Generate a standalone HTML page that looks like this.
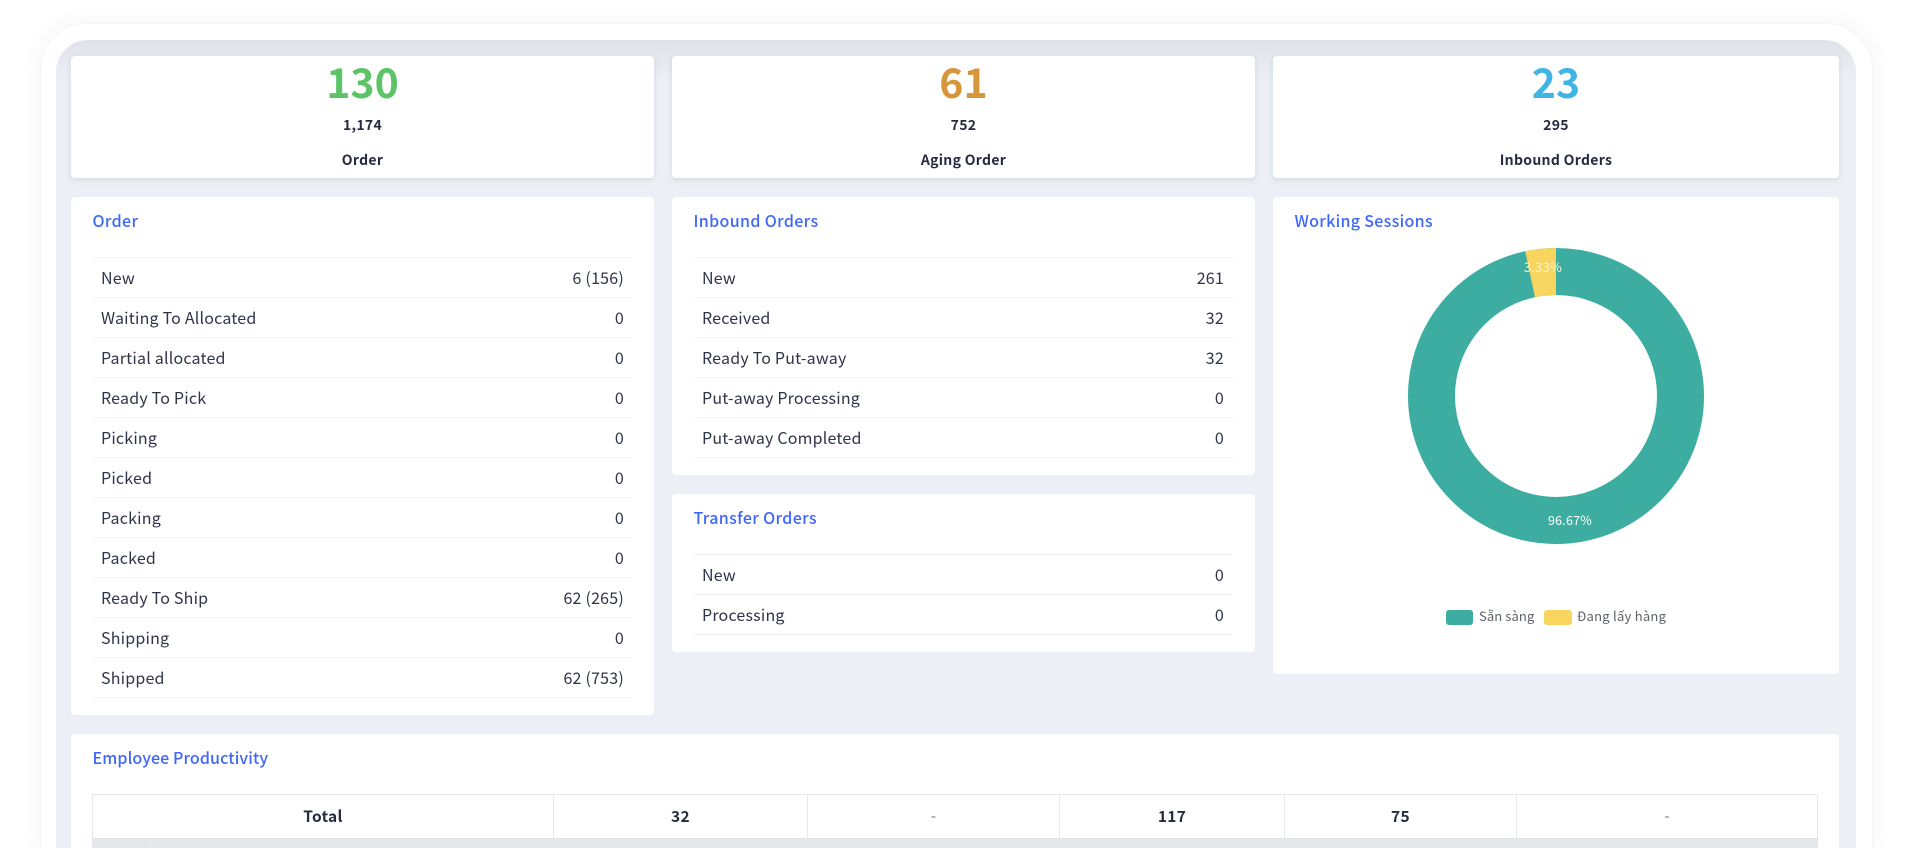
<!DOCTYPE html>
<html><head><meta charset="utf-8"><style>
*{box-sizing:border-box;margin:0;padding:0}
html,body{width:1912px;height:848px;overflow:hidden;background:#fff}
#p{position:absolute;left:0;top:0;width:1912px;height:848px;overflow:hidden;background:#fff;font-family:"Noto Sans CJK JP","Liberation Sans",sans-serif;color:#343a4e}
.a{position:absolute}
.frame{left:40px;top:23px;width:1833px;height:825px;background:#fff;border-radius:46px 46px 0 0;box-shadow:0 0 24px rgba(40,50,80,.06);border:1px solid #f3f4f6;border-bottom:0}
.bg{left:56px;top:40px;width:1800px;height:808px;background:linear-gradient(#dfe3ea 0,#e4e8ed 16px,#ecf0f6 40px);border-radius:32px 32px 0 0}
.c{position:absolute;background:#fff;border-radius:4px}
.s{box-shadow:0 2px 6px rgba(60,70,100,.14)}
.t{position:absolute;white-space:nowrap;line-height:20px;height:20px}
.ti{font-size:16px;font-weight:500;color:#3f66fb;letter-spacing:.35px;margin-top:-1px;margin-left:-.5px}
.l{font-size:16px;letter-spacing:.2px;color:#2f3548;margin-top:-1px}
.r{font-size:16px;letter-spacing:.22px;color:#2f3548;text-align:right;margin-top:-1px}
.n{font-weight:700;font-size:41px;text-align:center;line-height:50px;height:50px}
.b{font-weight:700;font-size:14px;letter-spacing:.3px;color:#262b40;text-align:center}
.h{position:absolute;height:1px;background:#f0f2f5}
.v{position:absolute;width:1px;background:#e4e7ec}
.w{font-weight:700;font-size:15.5px;color:#262b40;text-align:center;letter-spacing:.3px}
</style></head><body><div id="p">
<div class="a frame"></div><div class="a bg"></div>

<div class="c s" style="left:71px;top:56px;width:583px;height:122px"></div>
<div class="c s" style="left:672px;top:56px;width:583px;height:122px"></div>
<div class="c s" style="left:1273px;top:56px;width:566px;height:122px"></div>

<div class="t n" style="left:71px;top:55px;width:583px;color:#5ac466">130</div>
<div class="t b" style="left:71px;top:115px;width:583px">1,174</div>
<div class="t b" style="left:71px;top:150px;width:583px">Order</div>
<div class="t n" style="left:672px;top:55px;width:583px;color:#d6973c">61</div>
<div class="t b" style="left:672px;top:115px;width:583px">752</div>
<div class="t b" style="left:672px;top:150px;width:583px">Aging Order</div>
<div class="t n" style="left:1273px;top:55px;width:566px;color:#40b4e5">23</div>
<div class="t b" style="left:1273px;top:115px;width:566px">295</div>
<div class="t b" style="left:1273px;top:150px;width:566px">Inbound Orders</div>

<div class="c" style="left:71px;top:197px;width:583px;height:518px"></div>
<div class="t ti" style="left:93px;top:211px">Order</div>
<div class="h" style="left:93px;width:539px;top:257px"></div>
<div class="t l" style="left:101px;top:268px">New</div><div class="t r" style="right:1288px;top:268px">6 (156)</div><div class="h" style="left:93px;width:539px;top:297px"></div>
<div class="t l" style="left:101px;top:308px">Waiting To Allocated</div><div class="t r" style="right:1288px;top:308px">0</div><div class="h" style="left:93px;width:539px;top:337px"></div>
<div class="t l" style="left:101px;top:348px">Partial allocated</div><div class="t r" style="right:1288px;top:348px">0</div><div class="h" style="left:93px;width:539px;top:377px"></div>
<div class="t l" style="left:101px;top:388px">Ready To Pick</div><div class="t r" style="right:1288px;top:388px">0</div><div class="h" style="left:93px;width:539px;top:417px"></div>
<div class="t l" style="left:101px;top:428px">Picking</div><div class="t r" style="right:1288px;top:428px">0</div><div class="h" style="left:93px;width:539px;top:457px"></div>
<div class="t l" style="left:101px;top:468px">Picked</div><div class="t r" style="right:1288px;top:468px">0</div><div class="h" style="left:93px;width:539px;top:497px"></div>
<div class="t l" style="left:101px;top:508px">Packing</div><div class="t r" style="right:1288px;top:508px">0</div><div class="h" style="left:93px;width:539px;top:537px"></div>
<div class="t l" style="left:101px;top:548px">Packed</div><div class="t r" style="right:1288px;top:548px">0</div><div class="h" style="left:93px;width:539px;top:577px"></div>
<div class="t l" style="left:101px;top:588px">Ready To Ship</div><div class="t r" style="right:1288px;top:588px">62 (265)</div><div class="h" style="left:93px;width:539px;top:617px"></div>
<div class="t l" style="left:101px;top:628px">Shipping</div><div class="t r" style="right:1288px;top:628px">0</div><div class="h" style="left:93px;width:539px;top:657px"></div>
<div class="t l" style="left:101px;top:668px">Shipped</div><div class="t r" style="right:1288px;top:668px">62 (753)</div><div class="h" style="left:93px;width:539px;top:697px"></div>

<div class="c" style="left:672px;top:197px;width:583px;height:278px"></div>
<div class="t ti" style="left:694px;top:211px">Inbound Orders</div>
<div class="h" style="left:694px;width:539px;top:257px"></div>
<div class="t l" style="left:702px;top:268px">New</div><div class="t r" style="right:688px;top:268px">261</div><div class="h" style="left:694px;width:539px;top:297px"></div>
<div class="t l" style="left:702px;top:308px">Received</div><div class="t r" style="right:688px;top:308px">32</div><div class="h" style="left:694px;width:539px;top:337px"></div>
<div class="t l" style="left:702px;top:348px">Ready To Put-away</div><div class="t r" style="right:688px;top:348px">32</div><div class="h" style="left:694px;width:539px;top:377px"></div>
<div class="t l" style="left:702px;top:388px">Put-away Processing</div><div class="t r" style="right:688px;top:388px">0</div><div class="h" style="left:694px;width:539px;top:417px"></div>
<div class="t l" style="left:702px;top:428px">Put-away Completed</div><div class="t r" style="right:688px;top:428px">0</div><div class="h" style="left:694px;width:539px;top:457px"></div>

<div class="c" style="left:672px;top:494px;width:583px;height:158px"></div>
<div class="t ti" style="left:694px;top:508px">Transfer Orders</div>
<div class="h" style="left:694px;width:539px;top:554px"></div>
<div class="t l" style="left:702px;top:565px">New</div><div class="t r" style="right:688px;top:565px">0</div><div class="h" style="left:694px;width:539px;top:594px"></div>
<div class="t l" style="left:702px;top:605px">Processing</div><div class="t r" style="right:688px;top:605px">0</div><div class="h" style="left:694px;width:539px;top:634px"></div>

<div class="c" style="left:1273px;top:197px;width:566px;height:477px"></div>
<div class="t ti" style="left:1295px;top:211px;letter-spacing:.3px">Working Sessions</div>
<svg class="a" style="left:1400px;top:240px" width="312" height="312" viewBox="-156 -156 312 312">
<circle r="124.5" fill="none" stroke="#3dada2" stroke-width="47"/>
<path d="M0 -148A148 148 0 0 0 -30.8 -144.8L-21 -98.8A101 101 0 0 1 0 -101Z" fill="#f7d55f"/>
</svg>
<div class="t" style="left:1493px;top:257px;width:100px;text-align:center;font-size:13px;color:#fff3cc;letter-spacing:.2px">3.33%</div>
<div class="t" style="left:1520px;top:510px;width:100px;text-align:center;font-size:12.5px;color:#fff;letter-spacing:.2px">96.67%</div>
<div class="a" style="left:1446px;top:610px;width:27px;height:15px;background:#3dada2;border-radius:3px"></div>
<div class="t" style="left:1479px;top:606px;font-size:13px;color:#5d6068;letter-spacing:.1px">Sẵn sàng</div>
<div class="a" style="left:1544px;top:610px;width:28px;height:15px;background:#f7d55f;border-radius:3px"></div>
<div class="t" style="left:1577px;top:606px;font-size:13px;color:#5d6068;letter-spacing:.25px">Đang lấy hàng</div>

<div class="c" style="left:71px;top:734px;width:1768px;height:114px;border-radius:4px 4px 0 0"></div>
<div class="t ti" style="left:93px;top:748px;letter-spacing:.1px">Employee Productivity</div>
<div class="a" style="left:92px;top:794px;width:1726px;height:54px;border:1px solid #e4e7ec;border-bottom:0;background:#fff"></div>
<div class="a" style="left:93px;top:839px;width:1724px;height:9px;background:#e6e9ec"></div>
<div class="a" style="left:92px;top:838px;width:1726px;height:1px;background:#dfe2e7"></div>
<div class="v" style="left:145px;top:839px;height:9px;background:#dfe2e7"></div>
<div class="v" style="left:553px;top:794px;height:54px"></div>
<div class="v" style="left:807px;top:794px;height:54px"></div>
<div class="v" style="left:1059px;top:794px;height:54px"></div>
<div class="v" style="left:1284px;top:794px;height:54px"></div>
<div class="v" style="left:1516px;top:794px;height:54px"></div>
<div class="t w" style="left:93px;top:806px;width:460px">Total</div>
<div class="t w" style="left:554px;top:806px;width:253px">32</div>
<div class="t" style="left:808px;top:806px;width:251px;text-align:center;color:#777;font-size:15px">-</div>
<div class="t w" style="left:1060px;top:806px;width:224px">117</div>
<div class="t w" style="left:1285px;top:806px;width:231px">75</div>
<div class="t" style="left:1517px;top:806px;width:300px;text-align:center;color:#777;font-size:15px">-</div>
</div></body></html>
